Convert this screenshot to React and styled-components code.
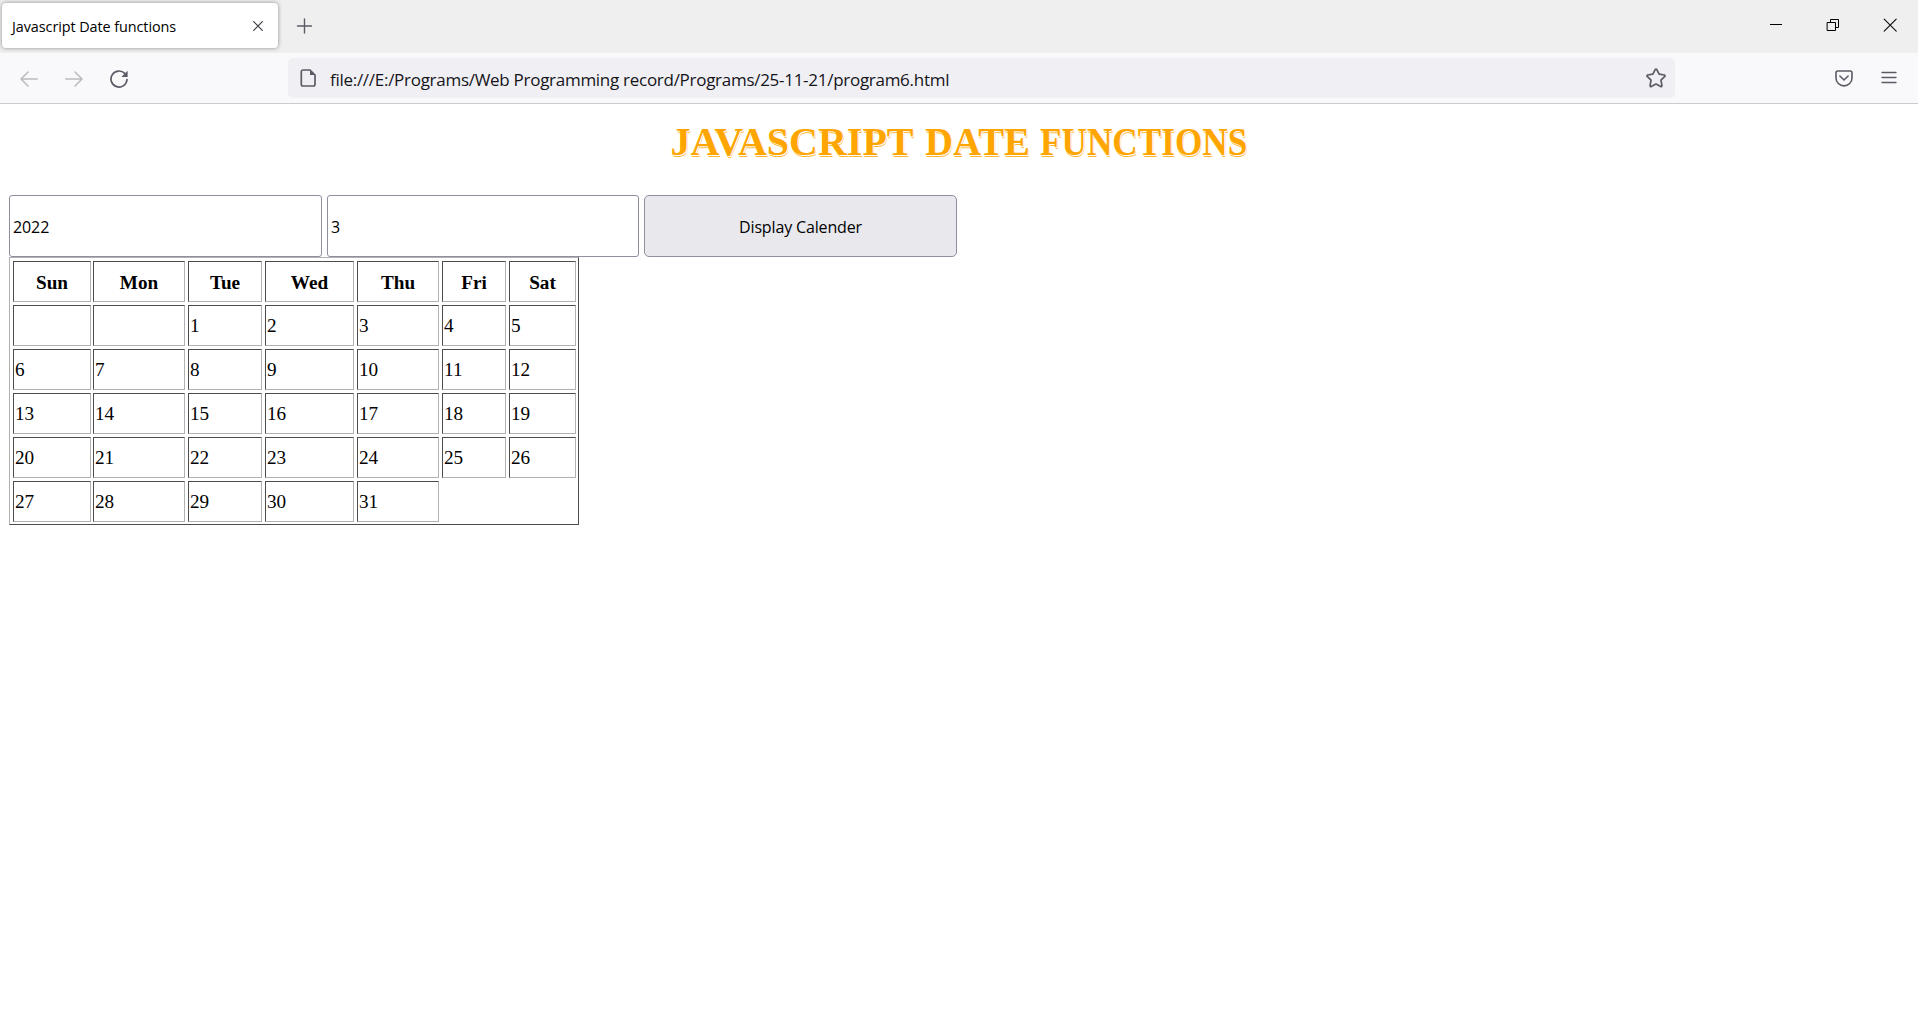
import React from "react";
import styled, { createGlobalStyle } from "styled-components";

const Global = createGlobalStyle`
  * { box-sizing: border-box; }
  html, body { margin: 0; background: #fff; }
  body { overflow: hidden; }
`;

const ui = `"Open Sans", "Noto Sans", sans-serif`;

const Window = styled.div`
  display: flex;
  flex-direction: column;
  height: 100vh;
  background: #fff;
`;

const TabStrip = styled.header`
  display: flex;
  align-items: flex-start;
  height: 53px;
  padding: 3px 21px 0 2px;
  background: #efefef;
`;

const Tab = styled.div`
  display: flex;
  align-items: center;
  justify-content: space-between;
  width: 276px;
  height: 45px;
  padding: 0 14px 0 10px;
  border-radius: 4px;
  background: #fff;
  box-shadow: 0 0 4px rgba(0, 0, 0, 0.42);
`;

const Label = styled.span`
  padding-top: 2px;
  font-family: ${ui};
  font-size: ${(p) => p.$size}px;
  letter-spacing: ${(p) => p.$track || 0}px;
  line-height: 24px;
  color: ${(p) => p.$color || "#15141a"};
  white-space: pre;
`;

const NewTab = styled.button`
  display: flex;
  margin: 15px 0 0 18px;
  padding: 0;
  border: 0;
  background: none;
`;

const Controls = styled.div`
  display: flex;
  align-items: center;
  gap: 44px;
  margin: 15px 0 0 auto;
`;

const Toolbar = styled.nav`
  display: flex;
  align-items: center;
  height: 51px;
  padding: 0 21px 0 20px;
  border-bottom: 1px solid #cccccc;
  background: #f9f9fb;
`;

const NavButtons = styled.div`
  display: flex;
  align-items: center;
  gap: 27px;
  width: 268px;
  padding-top: 1px;
`;

const AddressBar = styled.div`
  display: flex;
  align-items: center;
  width: 1387px;
  height: 40px;
  padding: 0 8px 0 12px;
  border-radius: 5px;
  background: #f0f0f4;
`;

const Address = styled.div`
  display: flex;
  flex: 1;
  padding: 2px 0 0 13px;
`;

const Actions = styled.div`
  display: flex;
  align-items: center;
  gap: 28px;
  margin-left: auto;
`;

const Page = styled.main`
  display: flex;
  flex-direction: column;
  flex: 1;
  padding: 15px 9px 0;
`;

const Title = styled.h1`
  display: flex;
  justify-content: center;
  gap: 10px;
  height: 76px;
  margin: 0;
  font: bold 40px/46px "Liberation Serif", serif;
  text-transform: uppercase;
  color: #ffa500;
  text-shadow: 1px 1px 0 #fff, 1px 2px 0 #ffb733;
`;

const Word = styled.span`
  display: block;
  width: ${(p) => p.$width}px;
  transform: scaleX(${(p) => p.$stretch});
  transform-origin: left;
  white-space: nowrap;
`;

const Form = styled.div`
  display: flex;
  gap: 5px;
  height: 62px;
`;

const field = `
  height: 62px;
  border: 1px solid #8f8f9d;
  font-family: ${ui};
  font-size: 16px;
  color: #000;
`;

const Input = styled.input`
  ${field}
  width: ${(p) => p.$width}px;
  padding: 2px 4px 0 3px;
  border-radius: 3px;
  background: #fff;
  outline: 0;
  letter-spacing: -0.1px;
`;

const Button = styled.button`
  ${field}
  width: 313px;
  padding: 2px 0 0;
  border-radius: 5px;
  background: #e9e9ed;
  letter-spacing: -0.15px;
`;

const Calendar = styled.div`
  display: grid;
  grid-template-columns: 80px 95px 77px 92px 85px 67px 67px;
  grid-auto-rows: 41px;
  row-gap: 3px;
  width: 570px;
  height: 268px;
  padding: 3px;
  border: 1px solid;
  border-color: #b2b2b2 #4c4c4c #4c4c4c #b2b2b2;
`;

const Cell = styled.div`
  display: flex;
  align-items: center;
  justify-content: ${(p) => (p.$head ? "center" : "flex-start")};
  margin-right: 3px;
  padding: ${(p) => (p.$head ? 2 : 0)}px 1px 0;
  border: 1px solid;
  border-color: #4c4c4c #b2b2b2 #b2b2b2 #4c4c4c;
  font: ${(p) => (p.$head ? "bold" : "normal")} 19.2px/22px "Liberation Serif", serif;
  color: #000;

  &:nth-child(7n + 1) { margin-right: 2px; }
  &:nth-child(7n) { margin-right: 0; }
`;

function Icon({ w, h, color = "#5b5b66", stroke = 1.5, children }) {
  return (
    <svg width={w} height={h} viewBox={`0 0 ${w} ${h}`} fill="none" stroke={color}
      strokeWidth={stroke} strokeLinecap="round" strokeLinejoin="round">
      {children}
    </svg>
  );
}

const days = ["Sun", "Mon", "Tue", "Wed", "Thu", "Fri", "Sat"];
const dates = ["", "", ...Array.from({ length: 31 }, (_, i) => i + 1)];

export default function App() {
  return (
    <Window>
      <Global />
      <TabStrip>
        <Tab>
          <Label $size={14.4} $track={-0.07} $color="#000">Javascript Date functions</Label>
          <Icon w={12} h={12} color="#3c3c44" stroke={1.2}><path d="M1.7 1.7l8.6 8.6M10.3 1.7l-8.6 8.6" /></Icon>
        </Tab>
        <NewTab aria-label="New tab">
          <Icon w={16} h={16} stroke={1.4}><path d="M8.5 1v14M1.5 8h14" /></Icon>
        </NewTab>
        <Controls>
          <Icon w={13} h={14} color="#000" stroke={1}><path d="M1 6.5h12" strokeLinecap="butt" /></Icon>
          <Icon w={13} h={14} color="#000" stroke={1}>
            <path strokeLinejoin="miter" d="M1.5 4.5h8v8h-8zM4.5 4.5v-3h8v8h-3" />
          </Icon>
          <Icon w={14} h={14} color="#111" stroke={1.15}><path d="M1.2 1.2l12 12M13.2 1.2l-12 12" /></Icon>
        </Controls>
      </TabStrip>
      <Toolbar>
        <NavButtons>
          <Icon w={18} h={18} color="#b9b9c0"><path d="M17.2 9H1M8 2L1 9l7 7" /></Icon>
          <Icon w={18} h={18} color="#b9b9c0"><path d="M.8 9H17M10 2l7 7-7 7" /></Icon>
          <Icon w={18} h={18} stroke={1.7}>
            <path d="M17 9.5A8 8 0 1 1 14.7 3.4" />
            <path d="M17.6 .8v6.2h-6.2z" fill="#5b5b66" stroke="none" />
          </Icon>
        </NavButtons>
        <AddressBar>
          <Icon w={17} h={18} stroke={1.7}>
            <path d="M3 1h7l5 5v9.3a1.7 1.7 0 0 1-1.7 1.7H3a1.7 1.7 0 0 1-1.7-1.7V2.7A1.7 1.7 0 0 1 3 1z" />
            <path d="M10 1v5h5z" fill="#5b5b66" stroke="none" />
          </Icon>
          <Address>
            <Label $size={17} $track={-0.28}>file:///E:/Programs/Web Programming record/Programs/25-11-21/program6.html</Label>
          </Address>
          <Icon w={22} h={20} stroke={1.7}>
            <path d="M10.3 1.4a.8.8 0 0 1 1.4 0l2.4 4.8 5.3.8a.8.8 0 0 1 .4 1.4l-3.8 3.8.9 5.5a.8.8 0 0 1-1.2.8L11 16l-4.7 2.5a.8.8 0 0 1-1.2-.8l.9-5.5-3.8-3.8a.8.8 0 0 1 .4-1.4l5.3-.8z" />
          </Icon>
        </AddressBar>
        <Actions>
          <Icon w={18} h={17} stroke={1.6}>
            <path d="M2.8 1h12.4A1.9 1.9 0 0 1 17 2.9v5a8 8 0 0 1-16 0v-5A1.9 1.9 0 0 1 2.8 1zM4.9 6L9 10l4.1-4" />
          </Icon>
          <Icon w={16} h={14} stroke={1.4}><path d="M1 1.5h14M1 6.5h14M1 11.5h14" /></Icon>
        </Actions>
      </Toolbar>
      <Page>
        <Title>
          <Word $width={244} $stretch={1}>Javascript</Word>
          <Word $width={105} $stretch={0.97}>Date</Word>
          <Word $width={208} $stretch={0.88}>functions</Word>
        </Title>
        <Form>
          <Input $width={313} defaultValue="2022" />
          <Input $width={312} defaultValue="3" />
          <Button>Display Calender</Button>
        </Form>
        <Calendar>
          {days.map((d) => <Cell key={d} $head>{d}</Cell>)}
          {dates.map((d, i) => <Cell key={i}>{d}</Cell>)}
        </Calendar>
      </Page>
    </Window>
  );
}
